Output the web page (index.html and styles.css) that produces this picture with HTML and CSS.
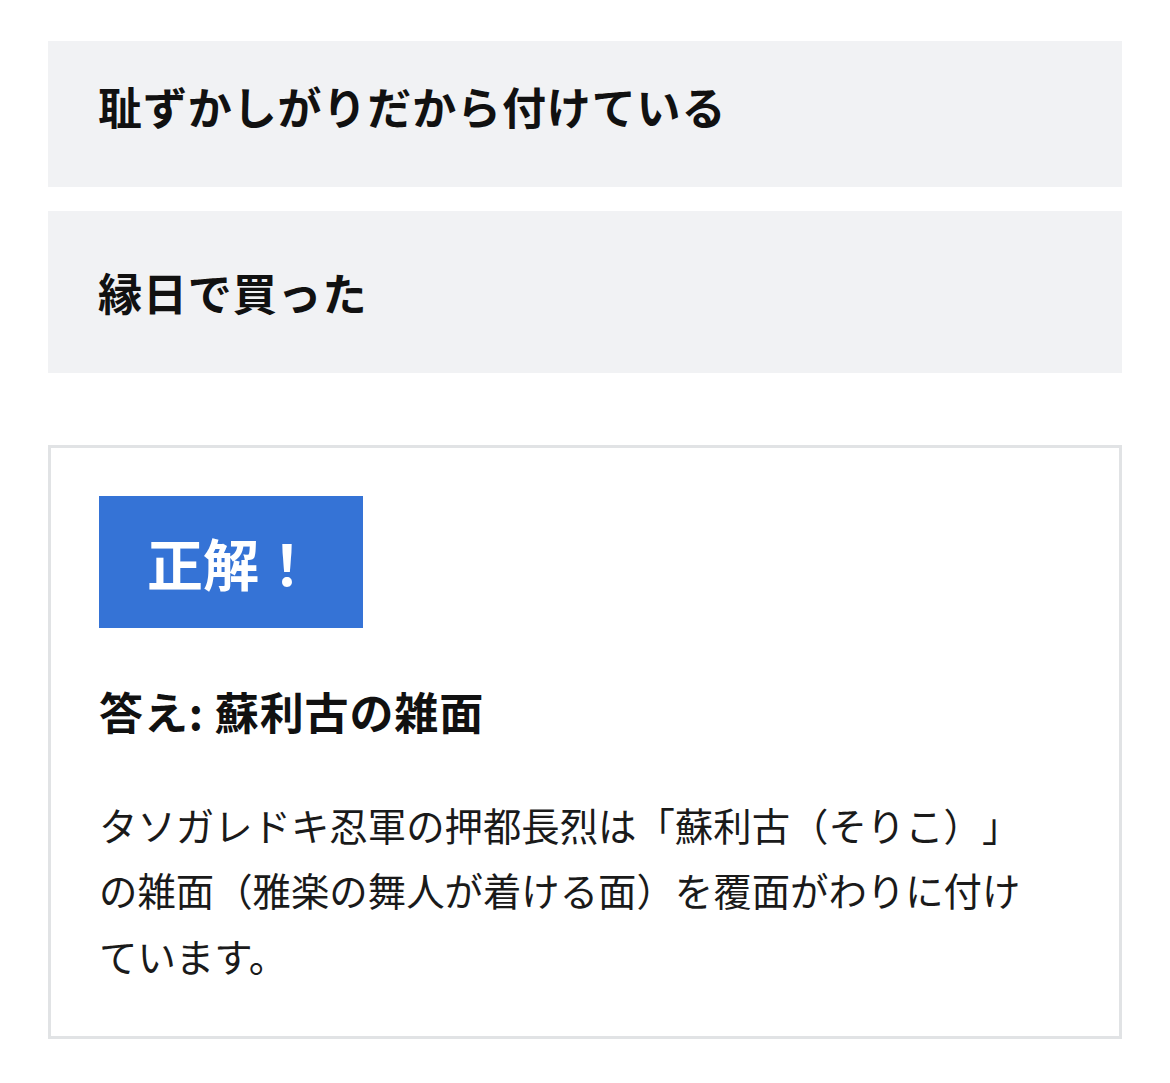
FILE: index.html
```html
<!DOCTYPE html>
<html lang="ja">
<head>
    <meta charset="UTF-8">
    <meta name="viewport" content="width=device-width, initial-scale=1.0">
    <title>クイズ</title>
    <link rel="stylesheet" href="styles.css">
</head>
<body>
    <div class="quiz">
        <div class="choices">
            <div class="choice first">耻ずかしがりだから付けている</div>
            <div class="choice">縁日で買った</div>
        </div>

        <div class="result">
            <div class="badge">正解！</div>
            <h3 class="answer">答え: 蘇利古の雑面</h3>
            <p class="explain">タソガレドキ忍軍の押都長烈は「蘇利古（そりこ）」の雑面（雅楽の舞人が着ける面）を覆面がわりに付けています。</p>
        </div>
    </div>
</body>
</html>
```

FILE: styles.css
```css
body {
    font-family: "Noto Sans CJK JP", "Noto Sans", sans-serif;
    margin: 0;
    padding: 0;
    background: #fff;
    color: #111;
    text-spacing-trim: space-all;
}
.quiz {
    padding: 41px 48px 44px;
}
.choices {
    display: flex;
    flex-direction: column;
    gap: 24px;
}
.choice {
    background-color: #f1f2f4;
    padding: 48px 50px;
    font-size: 44px;
    font-weight: 700;
    line-height: 66px;
    letter-spacing: 0.02em;
}
.choice.first {
    padding-top: 32px;
}
.result {
    margin-top: 72px;
    border: 3px solid #e1e3e5;
    padding: 48px;
}
.badge {
    display: inline-block;
    background-color: #3573d6;
    color: #fff;
    font-size: 56px;
    font-weight: 700;
    line-height: 84px;
    padding: 24px 48px;
}
.answer {
    margin: 50px 0 0;
    font-size: 44px;
    font-weight: 700;
    line-height: 66px;
    letter-spacing: 0.02em;
}
.explain {
    margin: 48px 0 0;
    padding-right: 20px;
    font-size: 38.4px;
    line-height: 1.7;
    color: #1a1a1a;
}
```
